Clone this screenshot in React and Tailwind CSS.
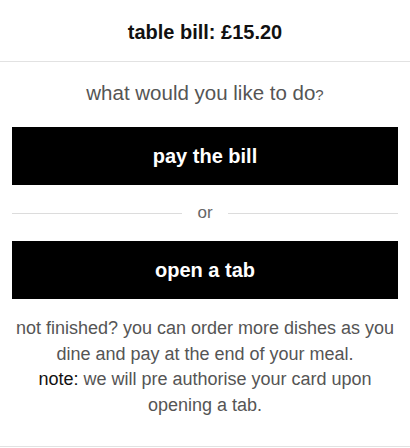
export default function App() {
  const font = { fontFamily: '"Liberation Sans", Arial, sans-serif' };
  return (
    <div className="w-[410px] h-[448px] bg-white overflow-hidden" style={font}>
      <div className="h-[62px] border-b border-[#e2e2e2] pt-[20px] text-center text-[20px] leading-[24px] font-bold text-[#111]">
        table bill: £15.20
      </div>
      <div className="mt-[19px] h-[24px] text-center text-[20.5px] leading-[24px] text-[#555]">
        what would you like to do<span className="text-[15px] leading-none">?</span>
      </div>
      <div className="px-[12px] mt-[22px]">
        <button className="w-full h-[58px] bg-black text-white text-[20px] font-bold flex items-center justify-center">
          pay the bill
        </button>
        <div className="h-[56px] flex items-center gap-[15px]">
          <div className="flex-1 h-px bg-[#dcdcdc]" />
          <span className="text-[17px] text-[#666] leading-none -mt-[1px]">or</span>
          <div className="flex-1 h-px bg-[#dcdcdc]" />
        </div>
        <button className="w-full h-[58px] bg-black text-white text-[20px] font-bold flex items-center justify-center">
          open a tab
        </button>
      </div>
      <div className="mt-[17px] px-[12px] pb-[28px] border-b border-[#e2e2e2] text-center text-[18px] leading-[25.5px] text-[#555]">
        <p>not finished? you can order more dishes as you dine and pay at the end of your meal.</p>
        <p className="px-[20px]">
          <span className="text-[#111]">note:</span> we will pre authorise your card upon opening a tab.
        </p>
      </div>
    </div>
  );
}
